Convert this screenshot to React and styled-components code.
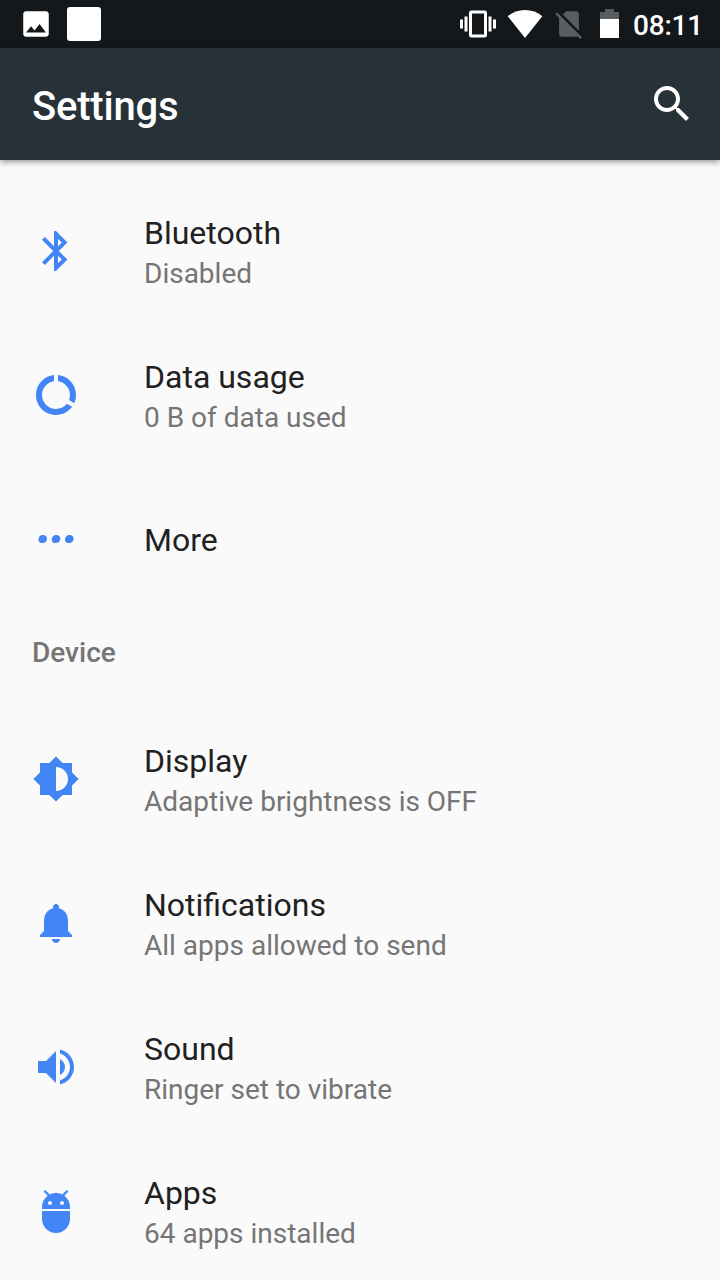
import React from "react";
import styled, { createGlobalStyle } from "styled-components";

const connectionItems = [
  { icon: "bluetooth", title: "Bluetooth", summary: "Disabled" },
  { icon: "dataUsage", title: "Data usage", summary: "0 B of data used" },
  { icon: "more", title: "More" },
];

const deviceItems = [
  { icon: "display", title: "Display", summary: "Adaptive brightness is OFF" },
  { icon: "bell", title: "Notifications", summary: "All apps allowed to send" },
  { icon: "sound", title: "Sound", summary: "Ringer set to vibrate" },
  { icon: "android", title: "Apps", summary: "64 apps installed" },
];

const iconPaths = {
  bluetooth:
    "M17.71 7.71L12 2h-1v7.59L6.41 5 5 6.41 10.59 12 5 17.59 6.41 19 11 14.41V22h1l5.71-5.71-4.3-4.29 4.3-4.29zM13 5.83l1.88 1.88L13 9.59V5.83zm1.88 10.46L13 18.17v-3.76l1.88 1.88z",
  dataUsage:
    "M13 2.05v3.03c3.39.49 6 3.39 6 6.92 0 .9-.18 1.75-.48 2.54l2.6 1.53c.56-1.24.88-2.62.88-4.07 0-5.18-3.95-9.45-9-9.95zM12 19c-3.87 0-7-3.13-7-7 0-3.53 2.61-6.43 6-6.92V2.05c-5.06.5-9 4.76-9 9.95 0 5.52 4.47 10 9.99 10 3.31 0 6.24-1.61 8.06-4.09l-2.6-1.53C16.17 17.98 14.21 19 12 19z",
  more: "M3.2 12.2C3.2 10.900 4.200 9.950 5.450 9.950 6.700 9.950 7.500 10.750 7.500 11.850 7.500 13.100 6.500 14.050 5.250 14.050 4 14.050 3.200 13.300 3.200 12.200zM9.850 12.200C9.850 10.900 10.850 9.950 12.100 9.950 13.350 9.950 14.150 10.750 14.150 11.850 14.150 13.100 13.150 14.050 11.900 14.050 10.650 14.050 9.850 13.300 9.850 12.200zM16.500 12.200C16.500 10.900 17.500 9.950 18.750 9.950 20 9.950 20.800 10.750 20.800 11.850 20.800 13.100 19.800 14.050 18.550 14.050 17.300 14.050 16.500 13.300 16.500 12.200z",
  display:
    "M20 15.31L23.31 12 20 8.69V4h-4.69L12 .69 8.69 4H4v4.69L.69 12 4 15.31V20h4.69L12 23.31 15.31 20H20v-4.69zM12 18V6c3.31 0 6 2.69 6 6s-2.69 6-6 6z",
  bell: "M12 22c1.1 0 2-.9 2-2h-4c0 1.1.89 2 2 2zm6-6v-5c0-3.07-1.64-5.64-4.5-6.32V4c0-.83-.67-1.5-1.5-1.5s-1.5.67-1.5 1.5v.68C7.63 5.36 6 7.92 6 11v5l-2 2v1h16v-1l-2-2z",
  sound:
    "M3 9v6h4l5 5V4L7 9H3zm13.5 3c0-1.77-1.02-3.29-2.5-4.03v8.05c1.48-.73 2.5-2.25 2.5-4.02zM14 3.23v2.06c2.89.86 5 3.54 5 6.71s-2.11 5.85-5 6.71v2.06c4.01-.91 7-4.49 7-8.77s-2.99-7.86-7-8.77z",
  android:
    "M5 16c0 3.87 3.13 7 7 7s7-3.13 7-7v-4H5v4zM16.12 4.37l2.1-2.1-.82-.83-2.3 2.31C14.16 3.28 13.12 3 12 3s-2.16.28-3.09.75L6.6 1.44l-.82.83 2.1 2.1C6.14 5.64 5 7.68 5 10v1h14v-1c0-2.32-1.14-4.36-2.88-5.63zM9 9c-.55 0-1-.45-1-1s.45-1 1-1 1 .45 1 1-.45 1-1 1zm6 0c-.55 0-1-.45-1-1s.45-1 1-1 1 .45 1 1-.45 1-1 1z",
  search:
    "M15.5 14h-.79l-.28-.27C15.41 12.59 16 11.11 16 9.5 16 5.91 13.09 3 9.5 3S3 5.91 3 9.5 5.91 16 9.5 16c1.61 0 3.09-.59 4.23-1.57l.27.28v.79l5 4.99L20.49 19l-4.99-5zm-6 0C7.01 14 5 11.99 5 9.5S7.01 5 9.5 5 14 7.01 14 9.5 11.99 14 9.5 14z",
  photo:
    "M21 19V5c0-1.1-.9-2-2-2H5c-1.1 0-2 .9-2 2v14c0 1.1.9 2 2 2h14c1.1 0 2-.9 2-2zM8.5 13.5l2.5 3.01L14.5 12l4.5 6H5l3.5-4.5z",
  vibrate:
    "M0 15h2V9H0v6zm3 2h2V7H3v10zm19-8v6h2V9h-2zm-3 8h2V7h-2v10zM16.5 3h-9C6.67 3 6 3.67 6 4.5v15c0 .83.67 1.5 1.5 1.5h9c.83 0 1.5-.67 1.5-1.5v-15c0-.83-.67-1.5-1.5-1.5zM16 19H8V5h8v14z",
  noSim:
    "M18.99 5c0-1.1-.89-2-1.99-2h-7L7.66 5.34 19 16.68 18.99 5zM3.65 3.88L2.38 5.15 5 7.77V19c0 1.1.9 2 2 2h10.01c.35 0 .67-.1.96-.26l1.88 1.88 1.27-1.27L3.65 3.88z",
};

function Icon({ name, size = 48 }) {
  return (
    <Glyph width={size} height={size} viewBox="0 0 24 24" aria-hidden="true">
      <path d={iconPaths[name]} />
    </Glyph>
  );
}

function StatusBar() {
  return (
    <StatusRow>
      <StatusNotifications>
        <Icon name="photo" size={34} />
        <BlankNotification />
      </StatusNotifications>
      <StatusSystem>
        <Icon name="vibrate" size={36} />
        <WifiIcon width="36" height="30" viewBox="0 0 36 30">
          <path d="M.7 7.2C5.5 3 11.5.9 18 .9s12.5 2.100 17.300 6.300L18 29z" />
        </WifiIcon>
        <SimSlot>
          <Icon name="noSim" size={34} />
        </SimSlot>
        <BatteryIcon width="19" height="30" viewBox="0 0 19 30">
          <path d="M0 3h5V0h9v3h5v7H0z" opacity=".3" />
          <path d="M0 10h19v19H0z" />
        </BatteryIcon>
        <Clock>08:11</Clock>
      </StatusSystem>
    </StatusRow>
  );
}

function SettingsItem({ icon, title, summary }) {
  return (
    <ItemRow>
      <Icon name={icon} />
      <ItemText>
        <ItemTitle>{title}</ItemTitle>
        {summary && <ItemSummary>{summary}</ItemSummary>}
      </ItemText>
    </ItemRow>
  );
}

export default function App() {
  return (
    <Screen>
      <GlobalStyle />
      <StatusBar />
      <AppBar>
        <AppTitle>Settings</AppTitle>
        <SearchButton aria-label="Search">
          <Icon name="search" />
        </SearchButton>
      </AppBar>
      <SettingsList>
        {connectionItems.map((item) => (
          <SettingsItem key={item.title} {...item} />
        ))}
        <SectionTitle>Device</SectionTitle>
        {deviceItems.map((item) => (
          <SettingsItem key={item.title} {...item} />
        ))}
      </SettingsList>
    </Screen>
  );
}

const GlobalStyle = createGlobalStyle`
  * {
    box-sizing: border-box;
  }

  body {
    margin: 0;
    background: #fafafa;
    font-family: Roboto, sans-serif;
  }
`;

const Screen = styled.div`
  display: flex;
  flex-direction: column;
  width: 720px;
  height: 1280px;
  overflow: hidden;
  background: #fafafa;
`;

const Glyph = styled.svg`
  display: block;
  flex-shrink: 0;
  fill: currentColor;
`;

const StatusRow = styled.div`
  display: flex;
  flex-shrink: 0;
  justify-content: space-between;
  height: 48px;
  padding: 0 17px 0 19px;
  background: #14181b;
  color: #fff;
`;

const StatusNotifications = styled.div`
  display: flex;
  align-items: center;
  gap: 14px;
`;

const BlankNotification = styled.span`
  width: 34px;
  height: 34px;
  border-radius: 3px;
  background: #fff;
`;

const StatusSystem = styled.div`
  display: flex;
  align-items: center;
`;

const WifiIcon = styled(Glyph)`
  margin-left: 11px;
`;

const SimSlot = styled.span`
  margin-left: 9px;
  color: #5a5d5f;
`;

const BatteryIcon = styled(Glyph)`
  margin-left: 14px;
`;

const Clock = styled.span`
  margin: 2px 0 0 14px;
  font-size: 28px;
  font-weight: 500;
  line-height: 33px;
  letter-spacing: -0.2px;
`;

const AppBar = styled.header`
  display: flex;
  flex-shrink: 0;
  align-items: center;
  justify-content: space-between;
  height: 112px;
  padding: 0 24px 0 32px;
  background: #273238;
  color: #fff;
  box-shadow: 0 2px 6px rgba(0, 0, 0, 0.4);
`;

const AppTitle = styled.h1`
  margin: 6px 0 0;
  font-size: 40px;
  font-weight: 500;
  line-height: 48px;
  letter-spacing: -0.2px;
`;

const SearchButton = styled.button`
  padding: 0;
  border: none;
  background: none;
  color: inherit;
`;

const SettingsList = styled.main`
  padding-top: 19px;
`;

const ItemRow = styled.div`
  display: flex;
  align-items: center;
  gap: 64px;
  height: 144px;
  padding: 0 32px;
  color: #4285f4;
`;

const ItemText = styled.div`
  display: flex;
  flex-direction: column;
  gap: 5px;
  padding-top: 1px;
`;

const ItemTitle = styled.span`
  font-size: 32px;
  line-height: 38px;
  color: #212121;
`;

const ItemSummary = styled.span`
  font-size: 28px;
  line-height: 33px;
  color: #757575;
`;

const SectionTitle = styled.h2`
  height: 96px;
  margin: 0;
  padding: 25px 32px 0;
  font-size: 28px;
  font-weight: 500;
  line-height: 33px;
  color: #757575;
`;
